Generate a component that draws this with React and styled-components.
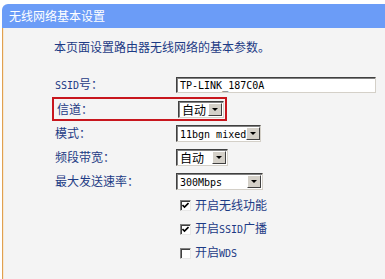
import React from 'react';
import styled, { createGlobalStyle, css } from 'styled-components';

const GlobalStyle = createGlobalStyle`
  html, body {
    margin: 0;
    padding: 0;
    background: #fff;
  }
  body {
    font-family: "Noto Sans CJK SC", "Noto Sans", sans-serif;
    font-size: 12px;
  }
`;

const Page = styled.div`
  width: 385px;
  height: 279px;
  box-sizing: border-box;
  padding: 4px 0 0 2px;
  display: flex;
  flex-direction: column;
  overflow: hidden;
`;

const Header = styled.div`
  height: 24px;
  line-height: 24px;
  background: #6b9cf7;
  color: #fff;
  border-top-left-radius: 6px;
  padding-left: 7px;
  font-size: 12px;
`;

const Panel = styled.div`
  flex: 1;
  background: #f4f4f4;
  border-left: 1px solid #e0a050;
  box-shadow: inset 1px 0 #f7e8d2;
  padding: 11px 0 0 51px;
`;

const Intro = styled.p`
  margin: 0;
  line-height: 16px;
  color: #1d3b85;
`;

const Form = styled.div`
  margin-top: 18px;
  display: flex;
  flex-direction: column;
`;

const Row = styled.div`
  display: grid;
  grid-template-columns: 122px auto;
  align-items: center;
  height: 24px;
  box-sizing: border-box;
  width: fit-content;
  ${p =>
    p.$highlight &&
    css`
      border: 2px solid #c8161d;
      margin-left: -2px;
      padding-left: 2px;
      padding-right: 1px;
    `}
`;

const Label = styled.span`
  color: #1d3b85;
  line-height: 16px;
  padding-left: 1px;
  white-space: nowrap;
`;

const Mono = styled.span`
  font-family: "DejaVu Sans Mono", "Liberation Mono", monospace;
  font-size: 10px;
  white-space: pre;
`;

const TextInput = styled.div`
  width: 200px;
  height: 16px;
  box-sizing: border-box;
  background: #fff;
  border: 1px solid;
  border-color: #404040 #d4d0c8 #d4d0c8 #404040;
  box-shadow: inset 1px 1px #808080;
  padding-left: 3px;
  display: flex;
  align-items: center;
  color: #000;
`;

const SelectBox = styled.div`
  width: ${p => p.$w}px;
  height: 17px;
  box-sizing: border-box;
  background: #fff;
  border: 1px solid;
  border-color: #404040 #d4d0c8 #d4d0c8 #404040;
  box-shadow: inset 1px 1px #808080;
  padding: 0 1px 0 3px;
  display: flex;
  align-items: center;
  justify-content: space-between;
  color: #000;
  line-height: 15px;
  white-space: nowrap;
`;

const Arrow = styled.span`
  flex: none;
  width: 14px;
  height: 13px;
  box-sizing: border-box;
  background: #d4d0c8;
  border: 1px solid;
  border-color: #fff #404040 #404040 #fff;
  display: flex;
  align-items: center;
  justify-content: center;
  &::after {
    content: '';
    border-left: 3px solid transparent;
    border-right: 3px solid transparent;
    border-top: 3px solid #000;
  }
`;

const CheckLine = styled.label`
  display: flex;
  align-items: center;
  gap: 4px;
  margin-left: 4px;
  color: #1d3b85;
  line-height: 16px;
  white-space: nowrap;
`;

const Box = styled.span`
  width: 11px;
  height: 11px;
  box-sizing: border-box;
  background: #fff;
  border: 1px solid;
  border-color: #808080 #e8e8e8 #e8e8e8 #808080;
  box-shadow: inset 1px 1px #404040;
  display: flex;
  align-items: center;
  justify-content: center;
`;

const Select = ({ width, children }) => (
  <SelectBox $w={width}>
    <span>{children}</span>
    <Arrow />
  </SelectBox>
);

const Checkbox = ({ checked, children }) => (
  <CheckLine>
    <Box>
      {checked && (
        <svg width="7" height="7" viewBox="0 0 7 7">
          <path d="M0.5 3 L2.5 5 L6.5 1" fill="none" stroke="#000" strokeWidth="1.6" />
        </svg>
      )}
    </Box>
    <span>{children}</span>
  </CheckLine>
);

export default function App() {
  return (
    <Page>
      <GlobalStyle />
      <Header>无线网络基本设置</Header>
      <Panel>
        <Intro>本页面设置路由器无线网络的基本参数。</Intro>
        <Form>
          <Row>
            <Label><Mono>SSID</Mono>号：</Label>
            <TextInput><Mono>TP-LINK_187C0A</Mono></TextInput>
          </Row>
          <Row $highlight>
            <Label>信道：</Label>
            <Select width={46}>自动</Select>
          </Row>
          <Row>
            <Label>模式：</Label>
            <Select width={85}><Mono>11bgn mixed</Mono></Select>
          </Row>
          <Row>
            <Label>频段带宽：</Label>
            <Select width={52}>自动</Select>
          </Row>
          <Row>
            <Label>最大发送速率：</Label>
            <Select width={87}><Mono>300Mbps</Mono></Select>
          </Row>
          <Row>
            <span />
            <Checkbox checked>开启无线功能</Checkbox>
          </Row>
          <Row>
            <span />
            <Checkbox checked>开启<Mono>SSID</Mono>广播</Checkbox>
          </Row>
          <Row>
            <span />
            <Checkbox>开启<Mono>WDS</Mono></Checkbox>
          </Row>
        </Form>
      </Panel>
    </Page>
  );
}
